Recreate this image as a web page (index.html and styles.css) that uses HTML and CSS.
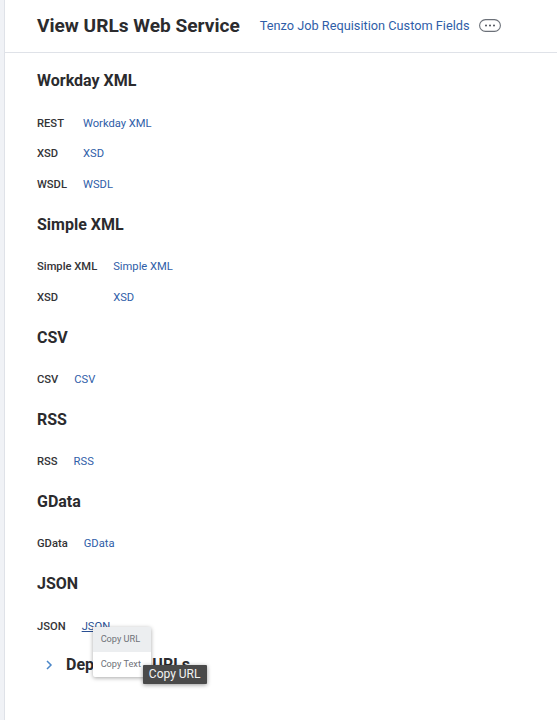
FILE: index.html
```html
<!DOCTYPE html>
<html lang="en">
<head>
<meta charset="utf-8">
<title>View URLs Web Service</title>
<link rel="stylesheet" href="styles.css">
</head>
<body>
<main class="page">
  <header class="header">
    <h1 class="title">View URLs Web Service</h1>
    <a class="header-link" href="#">Tenzo Job Requisition Custom Fields</a>
    <button class="more" aria-label="More">
      <svg width="22" height="13" viewBox="0 0 22 13"><rect x="0.6" y="0.6" width="20.8" height="11.8" rx="5.9" fill="#fff" stroke="#6b7078" stroke-width="1.1"/><circle cx="7" cy="6.5" r="1" fill="#4a4f57"/><circle cx="11" cy="6.5" r="1" fill="#4a4f57"/><circle cx="15" cy="6.5" r="1" fill="#4a4f57"/></svg>
    </button>
  </header>
  <div class="content">
    <section class="group">
      <h2 class="group-title">Workday XML</h2>
      <div class="rows">
        <span class="label">REST</span><a class="link" href="#">Workday XML</a>
        <span class="label">XSD</span><a class="link" href="#">XSD</a>
        <span class="label">WSDL</span><a class="link" href="#">WSDL</a>
      </div>
    </section>
    <section class="group">
      <h2 class="group-title">Simple XML</h2>
      <div class="rows">
        <span class="label">Simple XML</span><a class="link" href="#">Simple XML</a>
        <span class="label">XSD</span><a class="link" href="#">XSD</a>
      </div>
    </section>
    <section class="group">
      <h2 class="group-title">CSV</h2>
      <div class="rows">
        <span class="label">CSV</span><a class="link" href="#">CSV</a>
      </div>
    </section>
    <section class="group">
      <h2 class="group-title">RSS</h2>
      <div class="rows">
        <span class="label">RSS</span><a class="link" href="#">RSS</a>
      </div>
    </section>
    <section class="group">
      <h2 class="group-title">GData</h2>
      <div class="rows">
        <span class="label">GData</span><a class="link" href="#">GData</a>
      </div>
    </section>
    <section class="group">
      <h2 class="group-title">JSON</h2>
      <div class="rows">
        <span class="label">JSON</span>
        <span class="anchor">
          <a class="link link-active" href="#">JSON</a>
          <span class="menu">
            <span class="menu-item menu-item-active">Copy URL</span>
            <span class="menu-item">Copy Text</span>
          </span>
          <span class="tooltip">Copy URL</span>
        </span>
      </div>
    </section>
    <section class="deprecated">
      <svg class="chevron" width="8" height="12" viewBox="0 0 8 12"><path d="M2 2l4 4-4 4" fill="none" stroke="#4a86c8" stroke-width="1.500"/></svg>
      <h2 class="group-title">Deprecated URLs</h2>
    </section>
  </div>
</main>
</body>
</html>
```
FILE: styles.css
```css
* { box-sizing: border-box; }
html, body { margin: 0; padding: 0; height: 100%; background: #fff; }
body { font-family: Roboto, "Liberation Sans", sans-serif; color: #2b2b2e; overflow: hidden; }
.page { margin-left: 4px; min-height: 720px; border-left: 1px solid #dfe2e8; background: #fff; box-shadow: -4px 0 0 #f0f2f6; }
.header { height: 53px; border-bottom: 1px solid #dfe2e8; padding: 0 0 1px 32px; display: flex; align-items: center; }
.title { margin: 0; font-size: 19.100px; line-height: 24px; font-weight: 700; }
.header-link { margin-left: 20px; font-size: 12.750px; color: #2f5ea8; text-decoration: none; }
.more { margin-left: 9.500px; padding: 0; border: 0; background: none; display: flex; }
.content { padding: 17px 32px 0; }
.group { margin-bottom: 21px; }
.group-title { margin: 0; font-size: 16px; line-height: 22px; font-weight: 700; }
.rows { margin-top: 24.500px; display: grid; grid-template-columns: auto auto; justify-content: start; column-gap: 16px; row-gap: 16px; font-size: 11.200px; line-height: 14.700px; }
.label { font-weight: 500; color: #333336; }
.link { color: #2f5ea8; text-decoration: none; }
.anchor { position: relative; }
.link-active { text-decoration: underline; color: #2a4f93; }
.menu { position: absolute; left: 11px; top: 7px; width: 58px; height: 50px; background: #fff; border-radius: 2px; box-shadow: 0 1px 4px rgba(0,0,0,.35); display: flex; flex-direction: column; }
.menu-item { flex: 1; display: flex; align-items: center; padding-left: 8px; font-size: 9.200px; color: #6f7278; }
.menu-item-active { background: #eceef0; }
.tooltip { position: absolute; left: 61px; top: 45px; width: 64px; height: 19px; background: #4a4a4a; color: #f2f2f2; font-size: 12px; line-height: 19px; text-align: center; border-radius: 1px; box-shadow: 0 1px 4px rgba(0,0,0,.4); }
.deprecated { margin-top: -1px; display: flex; align-items: center; padding-left: 8px; gap: 13px; }
```
